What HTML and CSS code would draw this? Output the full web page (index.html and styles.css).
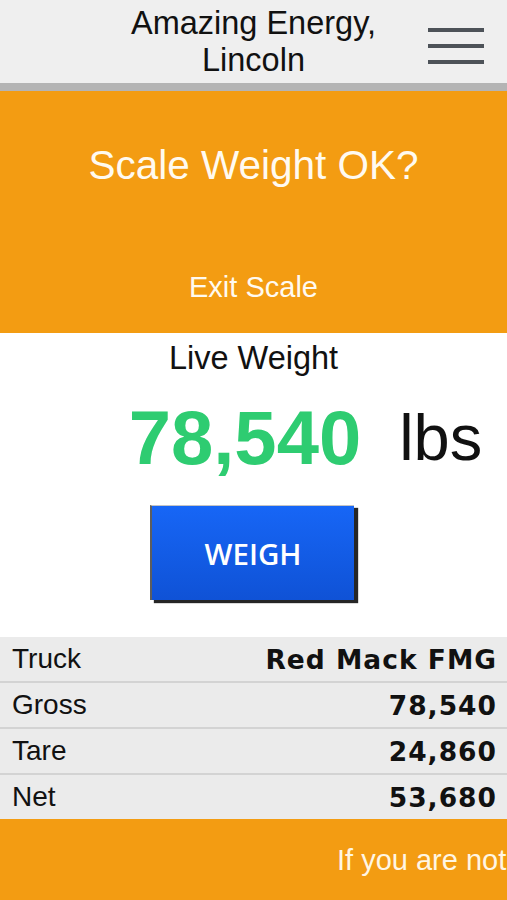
FILE: index.html
```html
<!DOCTYPE html>
<html lang="en">
<head>
    <meta charset="UTF-8">
    <meta name="viewport" content="width=device-width, initial-scale=1.0">
    <title>Scale</title>
    <link rel="stylesheet" href="styles.css">
</head>
<body>
    <!-- Top bar -->
    <div class="topBar">
        <div class="spacer"></div>
        <div class="siteName">Amazing Energy,<br>Lincoln</div>
        <div class="menuButton">
            <span></span>
            <span></span>
            <span></span>
        </div>
    </div>

    <!-- Prompt -->
    <div class="prompt">
        <div class="promptTitle">Scale Weight OK?</div>
        <div class="promptLink">Exit Scale</div>
    </div>

    <!-- Live weight -->
    <div class="live">
        <div class="liveLabel">Live Weight</div>
        <div class="liveReading">
            <span class="liveNumber">78,540</span>
            <span class="liveUnit">lbs</span>
        </div>
        <button class="weighButton">WEIGH</button>
    </div>

    <!-- Ticket -->
    <div class="ticket">
        <div class="ticketRow"><span>Truck</span><b>Red Mack FMG</b></div>
        <div class="ticketRow"><span>Gross</span><b>78,540</b></div>
        <div class="ticketRow"><span>Tare</span><b>24,860</b></div>
        <div class="ticketRow"><span>Net</span><b>53,680</b></div>
    </div>

    <!-- Scrolling notice -->
    <div class="notice">
        <div class="noticeText">If you are not the driver of this truck, please exit the scale</div>
    </div>
</body>
</html>
```

FILE: styles.css
```css
body {
    font-family: "Liberation Sans", Arial, sans-serif;
    margin: 0;
    background-color: #fff;
    color: #111;
    overflow: hidden;
}

.topBar {
    display: grid;
    grid-template-columns: 1fr auto 1fr;
    height: 83px;
    background-color: #efefef;
    border-bottom: 8px solid #b4b4b4;
}

.siteName {
    padding-top: 5px;
    font-size: 32.5px;
    line-height: 37px;
    text-align: center;
}

.menuButton {
    justify-self: end;
    margin: 28px 23px 0 0;
    display: flex;
    flex-direction: column;
    gap: 12.5px;
}

.menuButton span {
    display: block;
    width: 56px;
    height: 3.5px;
    background-color: #4d5258;
}

.prompt {
    background-color: #f39c12;
    color: #fffaf0;
    text-align: center;
    padding: 50px 0 28px;
}

.promptTitle {
    font-size: 40.5px;
    line-height: 48px;
}

.promptLink {
    margin-top: 80px;
    font-size: 29px;
    line-height: 36px;
}

.live {
    text-align: center;
    padding-top: 7px;
}

.liveLabel {
    font-size: 32.5px;
    line-height: 36px;
}

.liveReading {
    margin-top: 16px;
    display: flex;
    justify-content: center;
    align-items: center;
    gap: 38px;
    padding-left: 104px;
    height: 90px;
}

.liveNumber {
    font-size: 76px;
    font-weight: bold;
    color: #2ecc71;
}

.liveUnit {
    font-size: 65px;
}

.weighButton {
    display: block;
    margin: 23px 0 0 150px;
    width: 204px;
    height: 95px;
    border: none;
    border-left: 2px solid #5e5e5e;
    border-top: 1px solid #c4c4c4;
    background: linear-gradient(#1766f6, #0f52d6);
    box-shadow: 4px 3px 1px #262626;
    color: #fff;
    font-family: "Open Sans", sans-serif;
    font-weight: 600;
    font-size: 29.5px;
    cursor: pointer;
}

.ticket {
    margin-top: 37px;
    background-color: #ebebeb;
}

.ticketRow {
    display: flex;
    justify-content: space-between;
    align-items: center;
    height: 44px;
    padding: 0 10px 0 12px;
    border-bottom: 2px solid #d3d3d3;
    font-size: 28px;
}

.ticketRow:last-child {
    border-bottom: none;
}

.ticketRow b {
    font-family: "DejaVu Sans", Verdana, sans-serif;
    font-size: 26.5px;
    letter-spacing: 1px;
}

.notice {
    background-color: #f39c12;
    height: 100px;
    padding-top: 21px;
    overflow: hidden;
}

.noticeText {
    padding-left: 337px;
    white-space: nowrap;
    font-size: 29px;
    line-height: 40px;
    color: #fff6e4;
}
```
